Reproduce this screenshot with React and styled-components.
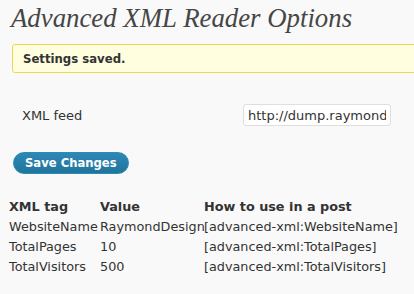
import React from "react";
import styled, { createGlobalStyle } from "styled-components";

const rows = [
  { tag: "WebsiteName", value: "RaymondDesign" },
  { tag: "TotalPages", value: "10" },
  { tag: "TotalVisitors", value: "500" },
];

const App = () => {
  return (
    <Page>
      <GlobalStyle />
      <Heading>Advanced XML Reader Options</Heading>
      <Notice>
        <p>Settings saved.</p>
      </Notice>
      <FormRow>
        <Label>XML feed</Label>
        <Field>
          <TextInput type="text" defaultValue="http://dump.raymonddesign.nl/feed.xml" />
        </Field>
      </FormRow>
      <SaveButton type="button">Save Changes</SaveButton>
      <TagTable>
        <colgroup>
          <col width="91" />
          <col width="104" />
          <col />
        </colgroup>
        <thead>
          <tr>
            <th>XML tag</th>
            <th>Value</th>
            <th>How to use in a post</th>
          </tr>
        </thead>
        <tbody>
          {rows.map((row) => (
            <tr key={row.tag}>
              <td>{row.tag}</td>
              <td>{row.value}</td>
              <td>[advanced-xml:{row.tag}]</td>
            </tr>
          ))}
        </tbody>
      </TagTable>
    </Page>
  );
};

export default App;

const GlobalStyle = createGlobalStyle`
  html, body {
    margin: 0;
    background: #f9f9f9;
  }
  body {
    font-family: "DejaVu Sans", Verdana, sans-serif;
    font-size: 13px;
    color: #333;
  }
`;

const Page = styled.div`
  width: 414px;
  height: 294px;
  overflow: hidden;
  padding-left: 8px;
  box-sizing: border-box;
`;

const Heading = styled.h2`
  margin: 0;
  padding: 4px 0 0 3px;
  font-family: Georgia, "Liberation Serif", serif;
  font-style: italic;
  font-weight: normal;
  font-size: 26.8px;
  line-height: 29px;
  color: #464646;
  white-space: nowrap;
`;

const Notice = styled.div`
  margin: 11px -20px 0 4px;
  background: #ffffe0;
  border: 1px solid #e6db55;
  border-radius: 3px;
  height: 27px;
  display: flex;
  align-items: center;
  padding-left: 10px;

  p {
    margin: 0;
    font-size: 11.7px;
    font-weight: bold;
    color: #333;
  }
`;

const FormRow = styled.div`
  display: flex;
  align-items: center;
  margin-top: 31px;
  padding-left: 14px;
`;

const Label = styled.div`
  width: 221px;
  font-size: 13px;
  color: #333;
`;

const Field = styled.div`
  flex: none;
`;

const TextInput = styled.input`
  box-sizing: border-box;
  width: 148px;
  height: 22px;
  padding: 0 4px;
  border: 1px solid #dfdfdf;
  border-radius: 3px;
  background: #fff;
  font-family: "DejaVu Sans", Verdana, sans-serif;
  font-size: 13px;
  color: #333;
  outline: none;
`;

const SaveButton = styled.button`
  display: block;
  margin: 26px 0 0 5px;
  height: 22px;
  padding: 0 11px;
  border: 1px solid #298cba;
  border-radius: 11px;
  background: linear-gradient(to bottom, #2e87b5, #21759b);
  color: #fff;
  font-family: "DejaVu Sans", Verdana, sans-serif;
  font-size: 11.6px;
  font-weight: bold;
  cursor: pointer;
`;

const TagTable = styled.table`
  margin: 22px 0 0 1px;
  width: 400px;
  border-collapse: collapse;
  table-layout: fixed;

  th,
  td {
    padding: 0;
    height: 20px;
    text-align: left;
    white-space: nowrap;
    overflow: visible;
    font-size: 12.8px;
    color: #333;
  }

  th {
    font-weight: bold;
  }
`;
